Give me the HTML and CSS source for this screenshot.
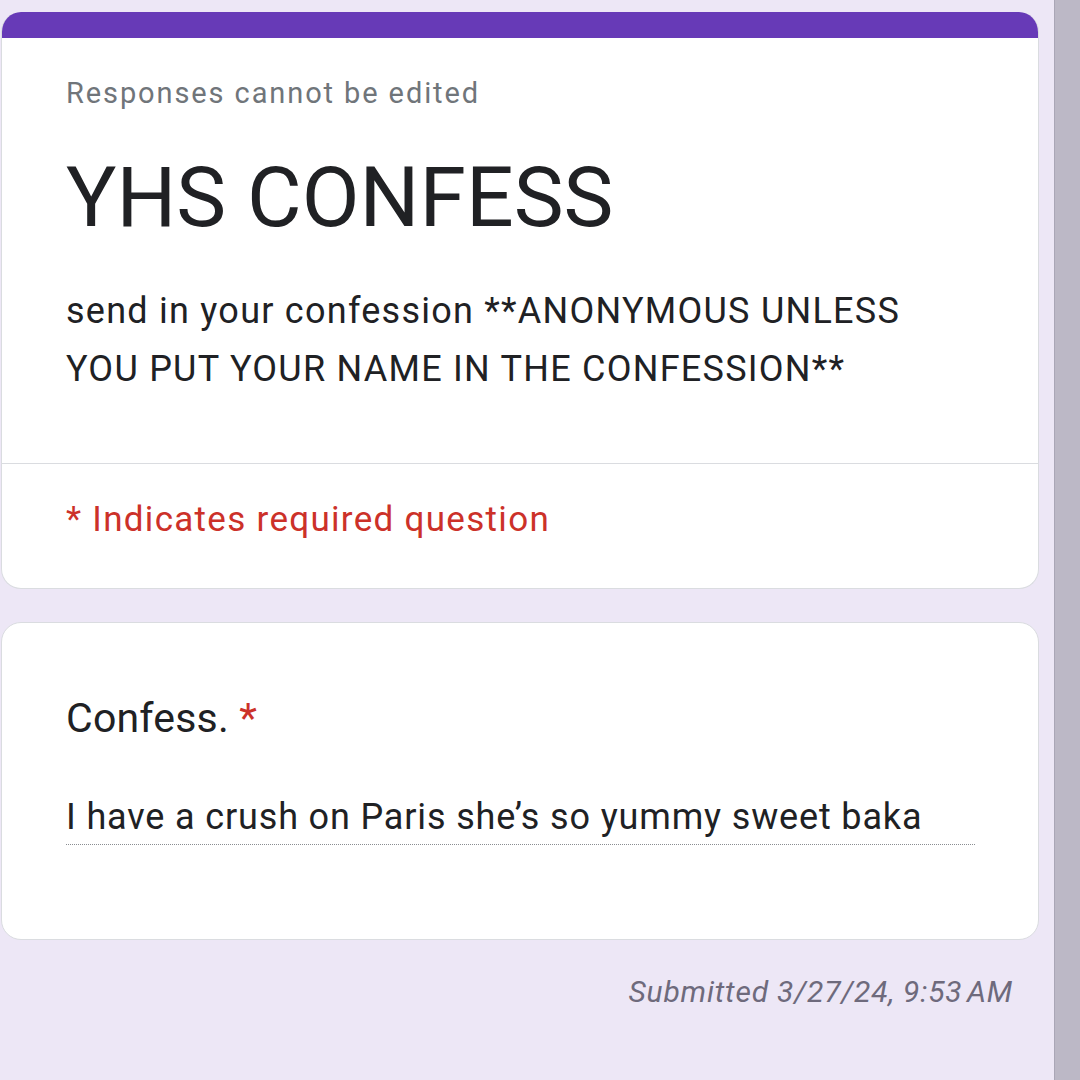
FILE: index.html
```html
<!DOCTYPE html>
<html lang="en">
<head>
  <meta charset="UTF-8">
  <title>YHS CONFESS</title>
  <link rel="stylesheet" href="styles.css">
</head>
<body>

<div class="page">
  <main class="form-column">
    <section class="card header-card">
      <div class="accent"></div>
      <div class="header-body">
        <p class="notice">Responses cannot be edited</p>
        <h1 class="form-title">YHS CONFESS</h1>
        <p class="form-desc">send in your confession **ANONYMOUS UNLESS YOU PUT YOUR NAME IN THE CONFESSION**</p>
      </div>
      <div class="required-note">* Indicates required question</div>
    </section>

    <section class="card question-card">
      <div class="question-title">Confess. <span class="req">*</span></div>
      <div class="answer">I have a crush on Paris she’s so yummy sweet baka</div>
    </section>

    <p class="submitted">Submitted 3/27/24, 9:53&#8239;AM</p>
  </main>

  <div class="scroll-strip"></div>
</div>

</body>
</html>
```

FILE: styles.css
```css
html, body {
  margin: 0;
  height: 100%;
}
body {
  font-family: Roboto, "Noto Sans", Arial, sans-serif;
  background: #ede7f6;
  color: #202124;
}
.page {
  display: flex;
  height: 100vh;
  overflow: hidden;
}
.form-column {
  width: 1038px;
  margin-left: 1px;
  padding-top: 12px;
}
.scroll-strip {
  width: 25px;
  margin-left: auto;
  background: #bcb8c6;
  border-left: 1px solid #aaa6b6;
}

.card {
  background: #ffffff;
  border: 1px solid #dadce0;
  border-radius: 20px;
  overflow: hidden;
}
.header-card {
  border-top: none;
}
.accent {
  height: 26px;
  background: #673ab7;
}
.header-body {
  padding: 35px 64px 65px;
  border-bottom: 1px solid #dadce0;
}
.notice {
  margin: 0;
  font-size: 29px;
  line-height: 40px;
  letter-spacing: 1.9px;
  color: #70757a;
}
.form-title {
  margin: 35px 0 0;
  font-size: 84px;
  line-height: 100px;
  font-weight: 400;
}
.form-desc {
  margin: 34px 0 0;
  font-size: 36px;
  line-height: 58px;
  letter-spacing: 1.25px;
  width: 880px;
}
.required-note {
  padding: 34px 64px 46px;
  font-size: 35px;
  line-height: 44px;
  letter-spacing: 1.3px;
  color: #cc3129;
}

.question-card {
  margin-top: 33px;
  padding: 69px 64px 94px;
}
.question-title {
  font-size: 41px;
  line-height: 52px;
  letter-spacing: 0.2px;
}
.req {
  color: #cc3129;
}
.answer {
  margin-top: 49px;
  width: 909px;
  padding-bottom: 3px;
  font-size: 36px;
  line-height: 48px;
  letter-spacing: 0.85px;
  border-bottom: 1px dotted #8a8d91;
}

.submitted {
  margin: 32px 26px 0 0;
  text-align: right;
  font-size: 30px;
  line-height: 40px;
  letter-spacing: 0.8px;
  font-style: italic;
  color: #6e6a7c;
}
```
